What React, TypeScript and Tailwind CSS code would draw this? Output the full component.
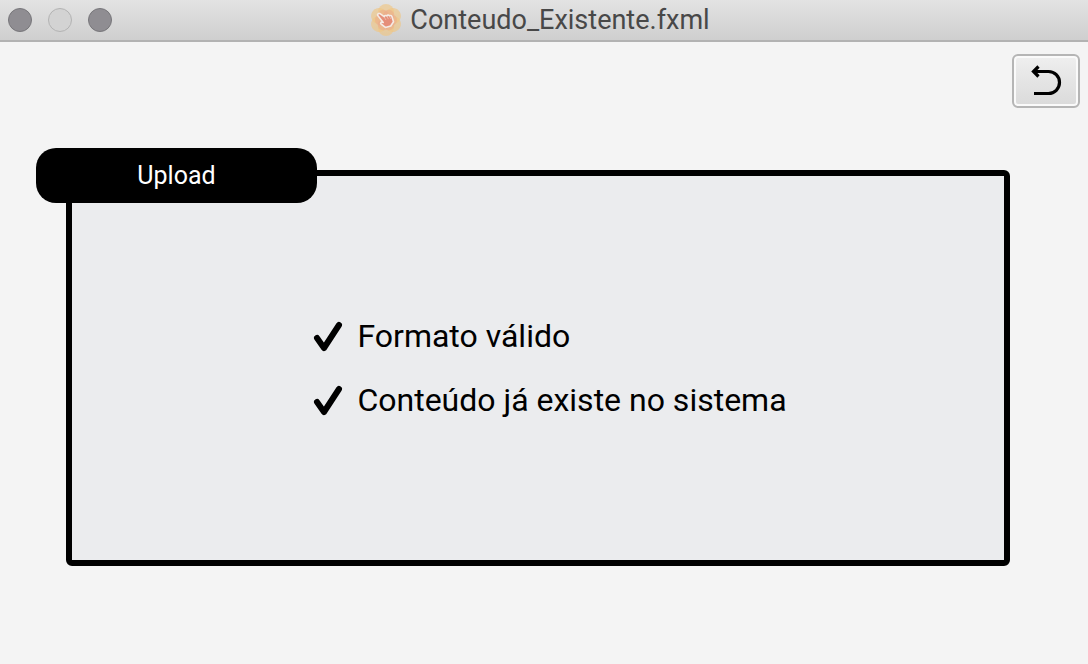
import React from "react";

function AppIcon() {
  const petals = [0, 60, 120, 180, 240, 300];
  return (
    <svg viewBox="0 0 32 32" className="size-8 shrink-0" aria-hidden="true">
      {petals.map((angle) => (
        <circle key={angle} cx="16" cy="8" r="8" fill="#f0c684" fillOpacity="0.65" transform={`rotate(${angle} 16 16)`} />
      ))}
      {petals.map((angle) => (
        <circle key={angle} cx="16" cy="10.500" r="5.500" fill="#eba48c" fillOpacity="0.45" transform={`rotate(${angle + 30} 16 16)`} />
      ))}
      <path
        d="M7.800 11.600C7 10.200 8.600 8.800 10 9.700l4.200 3c.3-1.300 1.700-1.600 2.600-.7.600-1.100 1.900-1.200 2.700-.2.900-.7 2-.3 2.400.7l1.600 5.200-2.800 4.300-5.300 1.400-4.400-3.400c-.9-.9 0-2.200 1.300-1.800l.9.300-5.400-6.900z"
        fill="#e58e79"
        stroke="#f4ebe5"
        strokeWidth="1.600"
        strokeLinejoin="round"
      />
      <path d="M14.500 13.500l1.300 2.200M17 12.500l1.200 2.300M19.600 12.300l.9 2.200" stroke="#f0cabb" strokeWidth="0.7" strokeLinecap="round" />
    </svg>
  );
}

function TitleBar() {
  return (
    <header className="flex h-[42px] items-center border-b-2 border-[#b2b2b2] bg-linear-to-b from-[#e3e3e3] to-[#cfcfcf] pr-4 pl-2">
      <div className="flex flex-1 gap-4">
        <button type="button" aria-label="Fechar" className="size-6 rounded-full border border-[#77767a] bg-[#8f8d92]" />
        <button type="button" aria-label="Minimizar" className="size-6 rounded-full border border-[#b3b3b3] bg-[#d3d3d3]" />
        <button type="button" aria-label="Ampliar" className="size-6 rounded-full border border-[#77767a] bg-[#8f8d92]" />
      </div>
      <div className="flex items-center gap-2">
        <AppIcon />
        <h1 className="text-[27px] leading-8 text-[#484848]">Conteudo_Existente.fxml</h1>
      </div>
      <div className="flex-1" />
    </header>
  );
}

function CheckItem({ children }: { children: React.ReactNode }) {
  return (
    <li className="flex items-center gap-[14px]">
      <svg viewBox="0 0 30 32" className="h-8 w-[30px] shrink-0" aria-hidden="true">
        <path d="M4 18 11 28 26 5" fill="none" stroke="#000" strokeWidth="6" strokeLinecap="round" strokeLinejoin="round" />
      </svg>
      <span>{children}</span>
    </li>
  );
}

export default function App() {
  return (
    <div className="flex min-h-screen flex-col bg-[#f4f4f4] font-['Roboto',sans-serif]">
      <TitleBar />
      <main className="flex flex-1 flex-col">
        <div className="flex justify-end px-2 pt-3">
          <button
            type="button"
            aria-label="Voltar"
            className="flex h-[54px] w-[68px] items-center justify-center rounded-md border-2 border-[#b5b5b5] bg-linear-to-b from-[#efefef] to-[#dadada] inset-ring-2 inset-ring-[#fafafa]"
          >
            <svg viewBox="0 0 32 32" className="size-8" fill="none" stroke="#000" strokeWidth="3.200" aria-hidden="true">
              <path d="M3 6.500H18.500a11 11 0 0 1 0 22H4" />
              <path d="M8.500 1.500 3.500 6.500l5 5" />
            </svg>
          </button>
        </div>
        <section
          aria-labelledby="upload-title"
          className="relative mt-[62px] mr-[78px] mb-[98px] ml-[66px] flex flex-1 flex-col items-center justify-center rounded-md border-6 border-black bg-[#ebecee] pl-6"
        >
          <h2
            id="upload-title"
            className="absolute -top-7 -left-9 flex h-[55px] w-[281px] items-center justify-center rounded-[20px] bg-black text-[25px] text-white"
          >
            Upload
          </h2>
          <ul className="flex flex-col gap-6 text-[32px] leading-10 text-black">
            <CheckItem>Formato válido</CheckItem>
            <CheckItem>Conteúdo já existe no sistema</CheckItem>
          </ul>
        </section>
      </main>
    </div>
  );
}
